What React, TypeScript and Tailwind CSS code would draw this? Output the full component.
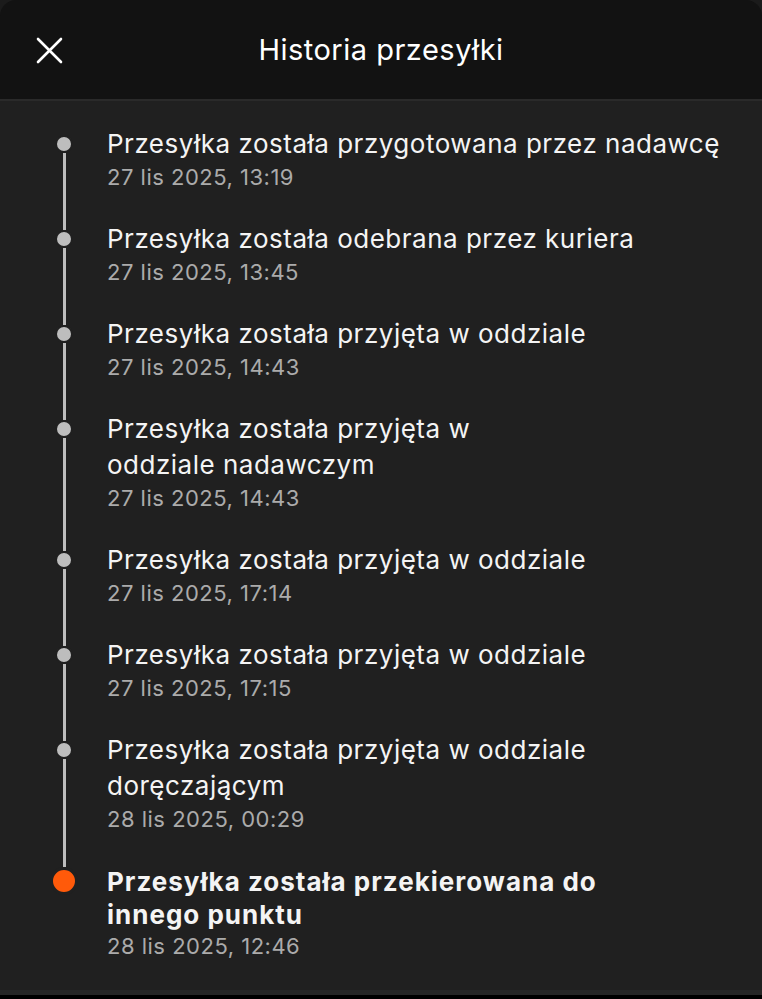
import React from "react";

interface TrackingEvent {
  title: string;
  date: string;
  current?: boolean;
}

// line breaks kept as in the app
const events: TrackingEvent[] = [
  { title: "Przesyłka została przygotowana przez nadawcę", date: "27 lis 2025, 13:19" },
  { title: "Przesyłka została odebrana przez kuriera", date: "27 lis 2025, 13:45" },
  { title: "Przesyłka została przyjęta w oddziale", date: "27 lis 2025, 14:43" },
  { title: "Przesyłka została przyjęta w\noddziale nadawczym", date: "27 lis 2025, 14:43" },
  { title: "Przesyłka została przyjęta w oddziale", date: "27 lis 2025, 17:14" },
  { title: "Przesyłka została przyjęta w oddziale", date: "27 lis 2025, 17:15" },
  { title: "Przesyłka została przyjęta w oddziale\ndoręczającym", date: "28 lis 2025, 00:29" },
  {
    title: "Przesyłka została przekierowana do\ninnego punktu",
    date: "28 lis 2025, 12:46",
    current: true,
  },
];

function CloseIcon() {
  return (
    <svg width="28" height="28" viewBox="0 0 28 28" fill="none">
      <path
        d="M3 3L26 26M26 3L3 26"
        stroke="#ffffff"
        strokeWidth="2.6"
        strokeLinecap="round"
      />
    </svg>
  );
}

function TimelineRow({
  event,
  first,
  last,
}: {
  event: TrackingEvent;
  first: boolean;
  last: boolean;
}) {
  return (
    <div className="flex">
      <div className="w-[107px] shrink-0 flex">
        <div className="ml-[49px] w-[30px] flex flex-col items-center">
          {event.current ? (
            <>
              <div className={`w-[3px] h-[4px] ${first ? "" : "bg-[#bdbdbd]"}`} />
              <div className="h-[28px] w-[28px] rounded-full border-[3px] border-[#202020] bg-[#ff5a0a]" />
            </>
          ) : (
            <>
              <div className={`w-[3px] h-[9px] ${first ? "" : "bg-[#bdbdbd]"}`} />
              <div className="h-[18px] w-[18px] rounded-full border-2 border-[#202020] bg-[#bdbdbd]" />
            </>
          )}
          {!last && <div className="w-[3px] flex-1 bg-[#bdbdbd]" />}
        </div>
      </div>
      <div className="pb-[28px] pr-[30px] flex-1">
        <div
          className={`whitespace-pre-line text-[26px] text-[#f4f4f4] ${
            event.current
              ? "font-bold tracking-[1px] leading-[33px] pt-[2px]"
              : "font-normal tracking-[0.5px] leading-[36px]"
          }`}
        >
          {event.title}
        </div>
        <div className="text-[22px] leading-[31px] tracking-[0.5px] text-[#ababab]">{event.date}</div>
      </div>
    </div>
  );
}

export default function App() {
  return (
    <div
      className="w-[762px] h-[999px] bg-[#1b1b1b] flex flex-col overflow-hidden"
      style={{ fontFamily: "Inter, 'Noto Sans', sans-serif" }}
    >
      <div className="h-[101px] shrink-0 rounded-t-[16px] bg-[#121212] border-b-2 border-[#2a2a2a] flex items-center relative">
        <button className="ml-[35px] mt-[1px] flex items-center justify-center">
          <CloseIcon />
        </button>
        <div className="absolute inset-x-0 top-0 h-[99px] flex items-center justify-center pointer-events-none">
          <span className="text-[29px] text-white tracking-[0.5px]">Historia przesyłki</span>
        </div>
      </div>
      <div className="flex-1 bg-[#202020] pt-[25px] flex flex-col">
        {events.map((e, i) => (
          <TimelineRow key={i} event={e} first={i === 0} last={i === events.length - 1} />
        ))}
      </div>
      <div className="h-[5px] bg-[#262626] shrink-0" />
      <div className="h-[9px] bg-black shrink-0" />
    </div>
  );
}
